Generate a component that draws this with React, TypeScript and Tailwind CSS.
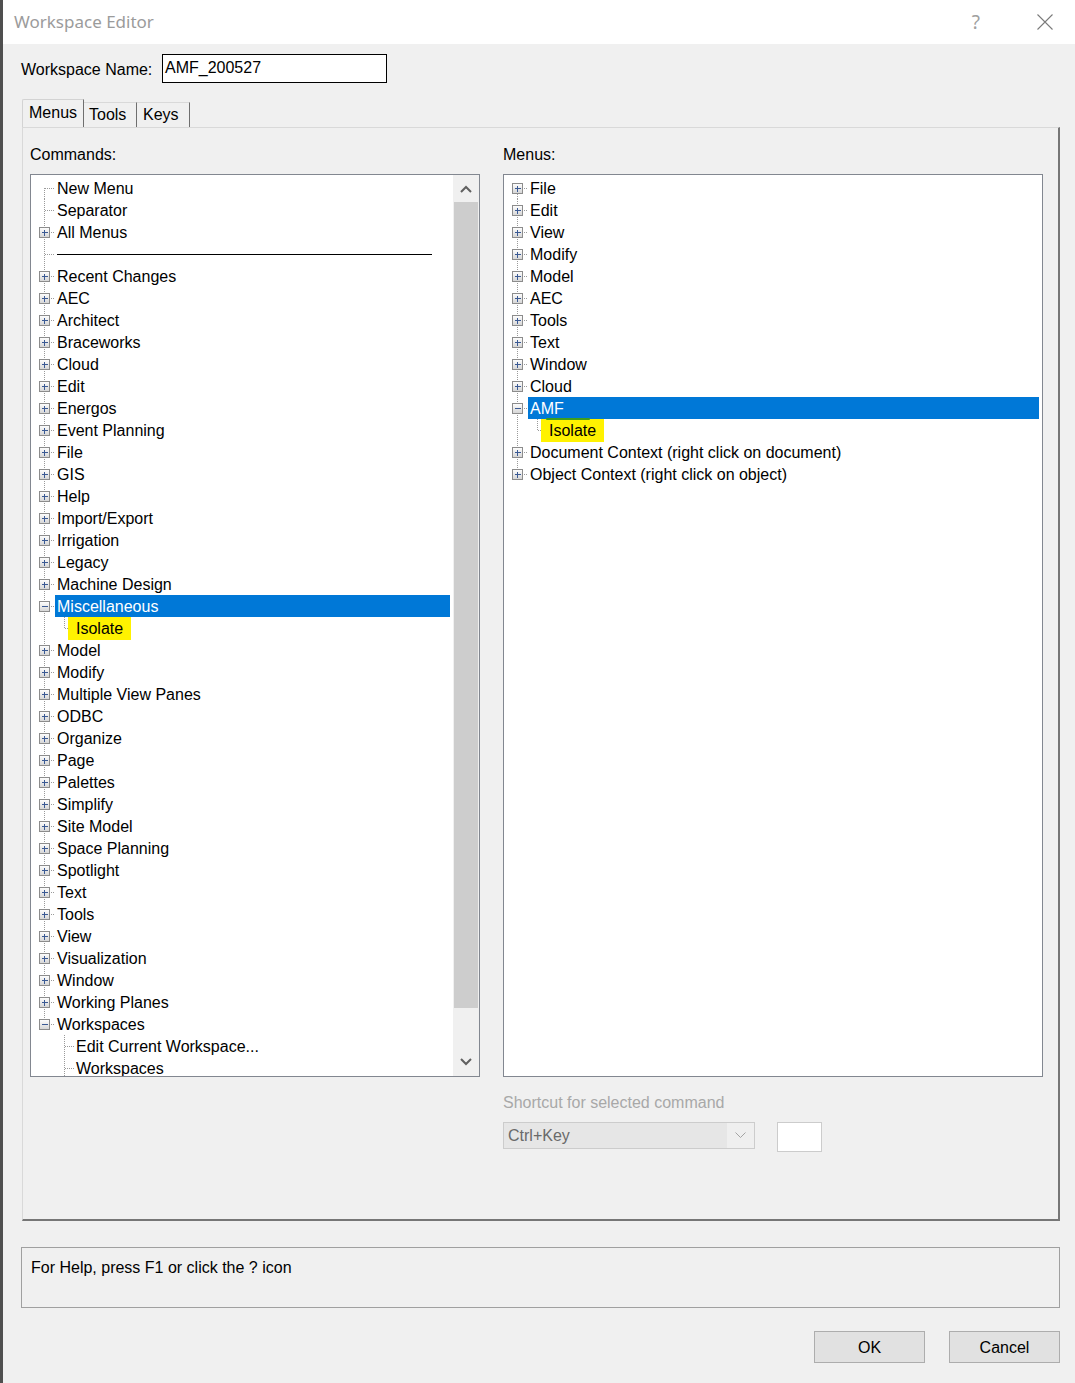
import React from 'react';
import clsx from 'clsx';

/* ------------------------------------------------------------------
   Workspace Editor dialog – tree view recreation
-------------------------------------------------------------------*/

type Row = {
  label: string;
  icon?: 'plus' | 'minus';
  child?: boolean;      // depth 1
  first?: boolean;      // root line starts at centre
  lastRoot?: boolean;   // root line stops at centre
  rootGoesOn?: boolean; // child row: root line runs past
  lastChild?: boolean;
  sep?: boolean;
  selected?: boolean;
  mark?: boolean;
  green?: boolean;
};

const leftRows: Row[] = [
  { label: 'New Menu', first: true },
  { label: 'Separator' },
  { label: 'All Menus', icon: 'plus' },
  { label: '', sep: true },
  ...[
    'Recent Changes', 'AEC', 'Architect', 'Braceworks', 'Cloud', 'Edit', 'Energos',
    'Event Planning', 'File', 'GIS', 'Help', 'Import/Export', 'Irrigation', 'Legacy',
    'Machine Design',
  ].map((l) => ({ label: l, icon: 'plus' as const })),
  { label: 'Miscellaneous', icon: 'minus', selected: true },
  { label: 'Isolate', child: true, rootGoesOn: true, lastChild: true, mark: true },
  ...[
    'Model', 'Modify', 'Multiple View Panes', 'ODBC', 'Organize', 'Page', 'Palettes',
    'Simplify', 'Site Model', 'Space Planning', 'Spotlight', 'Text', 'Tools', 'View',
    'Visualization', 'Window', 'Working Planes',
  ].map((l) => ({ label: l, icon: 'plus' as const })),
  { label: 'Workspaces', icon: 'minus', lastRoot: true },
  { label: 'Edit Current Workspace...', child: true },
  { label: 'Workspaces', child: true },
];

const rightRows: Row[] = [
  { label: 'File', icon: 'plus', first: true },
  ...['Edit', 'View', 'Modify', 'Model', 'AEC', 'Tools', 'Text', 'Window', 'Cloud'].map(
    (l) => ({ label: l, icon: 'plus' as const })
  ),
  { label: 'AMF', icon: 'minus', selected: true },
  { label: 'Isolate', child: true, rootGoesOn: true, lastChild: true, mark: true, green: true },
  { label: 'Document Context (right click on document)', icon: 'plus' },
  { label: 'Object Context (right click on object)', icon: 'plus', lastRoot: true },
];

/* dotted connector lines + expander box, drawn per row */
function Lines({ r }: { r: Row }) {
  const w = r.child ? 43 : 24;
  const dot = { stroke: '#9a9a9a', strokeWidth: 1, strokeDasharray: '1 1' };
  return (
    <svg width={w} height={22} className="shrink-0" shapeRendering="crispEdges">
      <defs>
        <linearGradient id="xbox" x1="0" y1="0" x2="0" y2="1">
          <stop offset="0" stopColor="#ffffff" />
          <stop offset="1" stopColor="#d4d4d4" />
        </linearGradient>
      </defs>
      {!r.child && (
        <>
          <line x1={13.5} y1={r.first ? 11 : 0} x2={13.5} y2={r.lastRoot ? 12 : 22} {...dot} />
          <line x1={14} y1={11.5} x2={24} y2={11.5} {...dot} />
        </>
      )}
      {r.child && (
        <>
          {r.rootGoesOn && <line x1={13.5} y1={0} x2={13.5} y2={22} {...dot} />}
          <line x1={33.5} y1={0} x2={33.5} y2={r.lastChild ? 12 : 22} {...dot} />
          <line x1={34} y1={11.5} x2={43} y2={11.5} {...dot} />
        </>
      )}
      {r.icon && (
        <g>
          <rect x={8.5} y={6.5} width={10} height={10} fill="url(#xbox)" stroke="#8c8c8c" />
          <line x1={10.5} y1={11.5} x2={16.5} y2={11.5} stroke="#3b5a94" />
          {r.icon === 'plus' && <line x1={13.5} y1={9} x2={13.5} y2={15} stroke="#3b5a94" />}
        </g>
      )}
    </svg>
  );
}

function TreeRow({ r }: { r: Row }) {
  return (
    <div className="flex h-[22px] items-center">
      <Lines r={r} />
      {r.sep ? (
        <div className="ml-[2px] h-px w-[375px] bg-black" />
      ) : (
        <span
          className={clsx(
            'relative h-[22px] whitespace-nowrap pl-[2px] leading-[23px]',
            r.selected && 'mr-[3px] flex-1 bg-[#0078d7] text-white',
            r.mark && '-ml-[6px] h-[23px] bg-[#fff200] pl-[8px] pr-[8px]'
          )}
        >
          {r.green && (
            <span className="absolute left-[5px] top-[-1px] h-[2px] w-[44px] rounded-full bg-[#3f9d1c]" />
          )}
          {r.label}
        </span>
      )}
    </div>
  );
}

function Chevron({ up }: { up?: boolean }) {
  return (
    <svg width="12" height="8" viewBox="0 0 12 8">
      <path
        d={up ? 'M1 7 L6 2 L11 7' : 'M1 1 L6 6 L11 1'}
        fill="none"
        stroke="#606060"
        strokeWidth="2"
      />
    </svg>
  );
}

export default function App() {
  return (
    <div
      className="flex h-[1383px] w-[1075px] flex-col overflow-hidden border-l-[3px] border-[#4f4f4f] bg-[#f0f0f0] text-[16px] text-black"
      style={{ fontFamily: '"Liberation Sans", Arial, sans-serif' }}
    >
      {/* title bar */}
      <div className="flex h-[44px] shrink-0 items-center bg-white pl-[11px] pr-[22px]">
        <span
          className="text-[17px] text-[#9b9b9b]"
          style={{ fontFamily: '"Noto Sans", "Open Sans", sans-serif' }}
        >
          Workspace Editor
        </span>
        <span
          className="ml-auto mr-[57px] text-[19px] text-[#a0a0a0]"
          style={{ fontFamily: '"Noto Sans", sans-serif' }}
        >
          ?
        </span>
        <svg width="16" height="16" viewBox="0 0 16 16">
          <path d="M0.5 0.5 L15.5 15.5 M15.5 0.5 L0.5 15.5" stroke="#7a7a7a" strokeWidth="1.1" />
        </svg>
      </div>

      <div className="flex flex-1 flex-col pl-[19px] pr-[15px]">
        {/* workspace name */}
        <div className="mt-[10px] flex items-center">
          <span className="-ml-[1px] w-[141px] pt-[2px]">Workspace Name:</span>
          <div className="h-[29px] w-[225px] border border-black bg-white pl-[2px] leading-[25px]">
            AMF_200527
          </div>
        </div>

        {/* tabs */}
        <div className="mt-[16px] flex h-[28px] items-end">
          <div className="flex h-[28px] w-[62px] items-center rounded-tl-[2px] border-l border-t border-r border-[#d3d3d3] border-r-[#6f6f6f] bg-[#f0f0f0] pl-[6px] pb-[2px]">
            Menus
          </div>
          <div className="flex h-[25px] w-[53px] items-center border-t border-r border-[#d9d9d9] border-r-[#6f6f6f] pl-[5px]">
            Tools
          </div>
          <div className="flex h-[25px] w-[53px] items-center border-t border-r border-[#d9d9d9] border-r-[#6f6f6f] pl-[6px]">
            Keys
          </div>
        </div>

        {/* tab panel */}
        <div className="flex h-[1094px] border-l border-t border-r-2 border-b-2 border-[#d9d9d9] border-r-[#767676] border-b-[#767676] pl-[7px] pr-[15px] pt-[17px]">
          {/* commands */}
          <div className="flex w-[450px] flex-col">
            <div className="h-[20px] leading-[20px]">Commands:</div>
            <div className="mt-[9px] flex h-[903px] border border-[#828790] bg-white">
              <div className="flex-1 overflow-hidden pt-[2px]">
                {leftRows.map((r, i) => (
                  <TreeRow key={i} r={r} />
                ))}
              </div>
              <div className="flex w-[26px] flex-col bg-[#f0f0f0]">
                <div className="flex h-[27px] items-center justify-center">
                  <Chevron up />
                </div>
                <div className="mx-[1px] h-[806px] bg-[#cdcdcd]" />
                <div className="flex-1" />
                <div className="flex h-[28px] items-center justify-center">
                  <Chevron />
                </div>
              </div>
            </div>
          </div>

          {/* menus */}
          <div className="ml-[23px] flex flex-1 flex-col">
            <div className="h-[20px] leading-[20px]">Menus:</div>
            <div className="mt-[9px] h-[903px] overflow-hidden border border-[#828790] bg-white pt-[2px]">
              {rightRows.map((r, i) => (
                <TreeRow key={i} r={r} />
              ))}
            </div>

            <div className="mt-[16px] h-[20px] leading-[20px] text-[#a8a8a8]">
              Shortcut for selected command
            </div>
            <div className="mt-[9px] flex items-start">
              <div className="flex h-[27px] w-[252px] border border-[#cccccc] bg-[#e6e6e6]">
                <span className="flex-1 pl-[4px] leading-[25px] text-[#6a6a6a]">Ctrl+Key</span>
                <span className="flex w-[27px] items-center justify-center bg-[#efefef]">
                  <svg width="11" height="7" viewBox="0 0 11 7">
                    <path d="M0.5 0.5 L5.5 5.5 L10.5 0.5" fill="none" stroke="#a3a3a3" />
                  </svg>
                </span>
              </div>
              <div className="ml-[22px] h-[30px] w-[45px] border border-[#cccccc] bg-white" />
            </div>
          </div>
        </div>

        {/* help strip */}
        <div className="-ml-[1px] mt-[26px] h-[61px] border border-[#a0a0a0] pl-[9px] pt-[10px] leading-[20px]">
          For Help, press F1 or click the ? icon
        </div>

        {/* buttons */}
        <div className="mt-[23px] flex justify-end gap-[24px]">
          <button className="h-[32px] w-[111px] border border-[#adadad] bg-[#e1e1e1] pt-[1px]">OK</button>
          <button className="h-[32px] w-[111px] border border-[#adadad] bg-[#e1e1e1] pt-[1px]">Cancel</button>
        </div>
      </div>
    </div>
  );
}
